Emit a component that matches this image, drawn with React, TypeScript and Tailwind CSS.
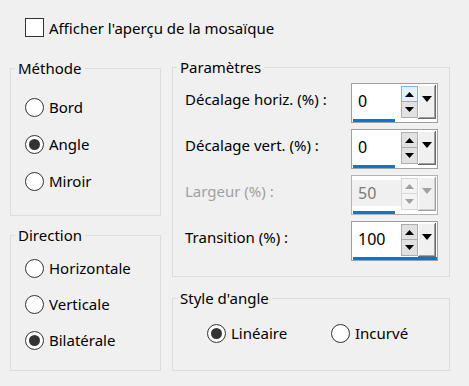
import React from 'react';

function Radio({ label, checked }: { label: string; checked?: boolean }) {
  return (
    <label className="flex items-center gap-[5px] h-[20px]">
      <span className="w-[19px] h-[19px] shrink-0 rounded-full border border-[#333333] bg-white flex items-center justify-center">
        {checked && <span className="w-[11px] h-[11px] rounded-full bg-[#333333]" />}
      </span>
      <span className="leading-[20px]">{label}</span>
    </label>
  );
}

function Group({ title, className, children }: { title: string; className?: string; children: React.ReactNode }) {
  return (
    <fieldset className={`border border-[#dcdcdc] ${className ?? ''}`}>
      <legend className="ml-[4px] px-[3px] leading-[20px]">{title}</legend>
      {children}
    </fieldset>
  );
}

function Arrow({ dir, w, h, color }: { dir: 'up' | 'down'; w: number; h: number; color: string }) {
  const pts = dir === 'up' ? `0,${h} ${w / 2},0 ${w},${h}` : `0,0 ${w},0 ${w / 2},${h}`;
  return (
    <svg width={w} height={h} viewBox={`0 0 ${w} ${h}`} className="block">
      <polygon points={pts} fill={color} />
    </svg>
  );
}

interface SpinProps {
  value: string;
  hot?: boolean;
  disabled?: boolean;
  full?: boolean;
}

function SpinBox({ value, hot, disabled, full }: SpinProps) {
  const arrow = disabled ? '#a0a0a0' : '#000000';
  const btn = disabled
    ? 'bg-[#f4f4f4] border-[#d6d6d6]'
    : 'bg-[#e1e1e1] border-[#adadad]';
  return (
    <div className={`w-[87px] h-[40px] shrink-0 border bg-white flex flex-col ${disabled ? 'border-[#b4b4b4]' : 'border-[#a0a0a0]'}`}>
      <div className="flex h-[35px]">
        <div className="w-[49px] flex items-start pt-[4px]">
          <div
            className={`w-full h-[26px] pl-[6px] leading-[26px] text-[16px] ${disabled ? 'bg-[#f0f0f0] text-[#7a7a7a]' : 'text-black'}`}
          >
            {value}
          </div>
        </div>
        <div className="w-[17px] mt-[2px] flex flex-col">
          <div
            className={`h-[16px] border flex items-center justify-center ${
              hot ? 'bg-[#e5f1fb] border-[#7eb4ea]' : btn
            }`}
          >
            <Arrow dir="up" w={9} h={5} color={arrow} />
          </div>
          <div className={`h-[16px] border border-t-0 flex items-center justify-center ${btn}`}>
            <Arrow dir="down" w={9} h={5} color={arrow} />
          </div>
        </div>
        <div
          className={`w-[18px] h-[34px] mt-[1px] bg-[#f0f0f0] flex justify-center pt-[11px] ${
            disabled
              ? 'shadow-[inset_-1px_-1px_#a0a0a0,inset_1px_1px_#ffffff,inset_-2px_-2px_#d0d0d0]'
              : 'shadow-[inset_-1px_-1px_#696969,inset_1px_1px_#ffffff,inset_-2px_-2px_#a0a0a0]'
          }`}
        >
          <Arrow dir="down" w={10} h={6} color={arrow} />
        </div>
      </div>
      <div className={`h-[3px] ml-[1px] bg-[#0078d7] ${full ? 'w-[84px]' : 'w-[42px]'}`} />
    </div>
  );
}

function Row({ label, disabled, children }: { label: string; disabled?: boolean; children: React.ReactNode }) {
  return (
    <div className="flex justify-between items-start">
      <span className={`mt-[6px] leading-[20px] ${disabled ? 'text-[#a0a0a0]' : ''}`}>{label}</span>
      {children}
    </div>
  );
}

export default function App() {
  return (
    <div className="w-[469px] h-[386px] overflow-hidden bg-[#f0f0f0] pt-[18px] text-[15px] text-black font-['Noto_Sans',sans-serif]">
      <label className="flex items-center gap-[5px] ml-[25px] h-[19px]">
        <span className="w-[19px] h-[19px] shrink-0 border border-[#333333] bg-white" />
        <span className="leading-[20px]">Afficher l'aperçu de la mosaïque</span>
      </label>

      <div className="flex mt-[20px]">
        {/* left column */}
        <div className="ml-[10px] w-[151px] flex flex-col pt-[1px]">
          <Group title="Méthode" className="h-[158px]">
            <div className="flex flex-col gap-[17px] pl-[14px] pt-[19px]">
              <Radio label="Bord" />
              <Radio label="Angle" checked />
              <Radio label="Miroir" />
            </div>
          </Group>
          <Group title="Direction" className="h-[146px] mt-[9px]">
            <div className="flex flex-col gap-[16px] pl-[14px] pt-[13px]">
              <Radio label="Horizontale" />
              <Radio label="Verticale" />
              <Radio label="Bilatérale" checked />
            </div>
          </Group>
        </div>

        {/* right column */}
        <div className="ml-[11px] w-[278px] flex flex-col">
          <Group title="Paramètres" className="h-[220px]">
            <div className="flex flex-col gap-[6px] pt-[6px] pl-[12px] pr-[11px]">
              <Row label="Décalage horiz. (%) :">
                <SpinBox value="0" hot />
              </Row>
              <Row label="Décalage vert. (%) :">
                <SpinBox value="0" />
              </Row>
              <Row label="Largeur (%) :" disabled>
                <SpinBox value="50" disabled />
              </Row>
              <Row label="Transition (%) :">
                <SpinBox value="100" full />
              </Row>
            </div>
          </Group>
          <Group title="Style d'angle" className="h-[83px] mt-[11px]">
            <div className="flex pl-[34px] pt-[15px]">
              <div className="w-[124px]">
                <Radio label="Linéaire" checked />
              </div>
              <Radio label="Incurvé" />
            </div>
          </Group>
        </div>
      </div>
    </div>
  );
}
